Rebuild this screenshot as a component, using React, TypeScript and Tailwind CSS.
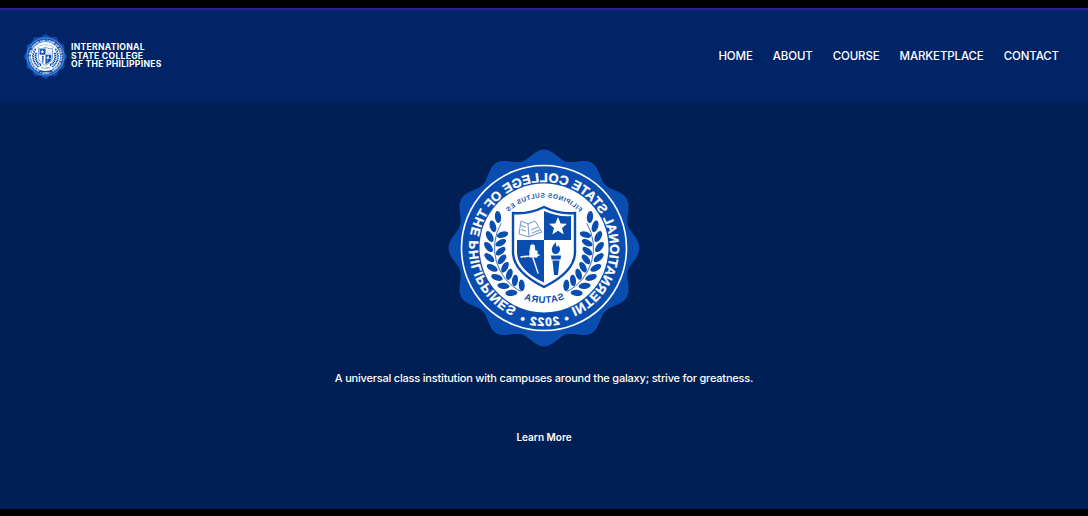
const INK = "#0a4db0";

// wavy badge outline, 12 lobes
function badgePath() {
  const pts: string[] = [];
  for (let i = 0; i < 360; i += 3) {
    const a = (i * Math.PI) / 180;
    const r = 92.5 + 4.5 * Math.cos(12 * a);
    pts.push(`${(0.985 * r * Math.sin(a)).toFixed(2)} ${(-1.015 * r * Math.cos(a)).toFixed(2)}`);
  }
  return `M${pts.join("L")}Z`;
}

function arc(r: number, from: number, to: number, sweep: 0 | 1) {
  const p = (d: number) => {
    const a = (d * Math.PI) / 180;
    return `${(r * Math.sin(a)).toFixed(2)} ${(-r * Math.cos(a)).toFixed(2)}`;
  };
  const large = Math.abs(to - from) > 180 ? 1 : 0;
  return `M${p(from)}A${r} ${r} 0 ${large} ${sweep} ${p(to)}`;
}

function Laurel() {
  const angles = [56, 67, 78, 89, 100, 111, 122, 133, 144];
  return (
    <g fill={INK}>
      {[1, -1].map((side) => (
        <g key={side} transform={`scale(${side} 1)`}>
          <path d={arc(49.5, 60, 152, 1)} fill="none" stroke={INK} strokeWidth="0.8" />
          {angles.map((d) => {
            const a = (d * Math.PI) / 180;
            const ox = 55.5 * Math.sin(a);
            const oy = -55.5 * Math.cos(a);
            const ix = 43.5 * Math.sin(a + 0.09);
            const iy = -43.5 * Math.cos(a + 0.09);
            return (
              <g key={d}>
                <ellipse cx={ox} cy={oy} rx="3.1" ry="6" transform={`rotate(${d - 50} ${ox} ${oy})`} />
                {d > 60 && (
                  <ellipse cx={ix} cy={iy} rx="3" ry="5.8" transform={`rotate(${d + 40} ${ix} ${iy})`} />
                )}
              </g>
            );
          })}
        </g>
      ))}
    </g>
  );
}

function Shield({ id }: { id: string }) {
  const outer = "M0 -41C10 -36 21 -34 31 -35L31 4C31 20 16 31 0 39C-16 31 -31 20 -31 4L-31 -35C-21 -34 -10 -36 0 -41Z";
  const inner = "M0 -37C9 -33 19 -31 27 -32L27 4C27 18 14 28 0 34.5C-14 28 -27 18 -27 4L-27 -32C-19 -31 -9 -33 0 -37Z";
  return (
    <g>
      <path d={outer} fill="#fff" stroke={INK} strokeWidth="2.4" />
      <clipPath id={id}>
        <path d={inner} />
      </clipPath>
      <g clipPath={`url(#${id})`}>
        <rect x="-31" y="-41" width="31" height="33" fill={INK} />
        <rect x="0" y="-8" width="31" height="47" fill={INK} />
      </g>
      {/* star */}
      <path
        d="M-14 -31L-11.4 -24.6L-5 -24.3L-10 -20.1L-8.3 -13.5L-14 -17.2L-19.7 -13.5L-18 -20.1L-23 -24.3L-16.6 -24.6Z"
        fill="#fff"
      />
      {/* book */}
      <g fill="#fff" stroke="#5d8ad4" strokeWidth="0.9" strokeLinejoin="round">
        <path d="M2 -16L9 -27L16 -24L23 -27L25 -14L15 -11L8 -14Z" />
        <path d="M16 -24L15 -11M4 -18L12 -15M6 -21L13 -18M18 -21L23 -22.5M18 -17L23 -18.5" fill="none" />
      </g>
      {/* hand with quill */}
      <g fill="none" stroke="#fff" strokeLinecap="round" strokeLinejoin="round">
        <path d="M5 7L23 9" strokeWidth="1.6" strokeDasharray="4 1.5" />
        <path d="M7 3H14V9H7Z" fill="#fff" strokeWidth="1.2" />
        <path d="M9 3L10 -3L13 -3L14 3" fill="#fff" strokeWidth="1" />
        <path d="M11 10L6 25" strokeWidth="1.4" />
      </g>
      {/* torch */}
      <g fill={INK}>
        <path d="M-12 -6C-9 -3 -7 0 -8 3C-8.5 5 -9.5 6 -11 6C-14 6 -16 4 -16 1C-16 -1 -14.5 -2 -14 -3C-13.5 -2 -13.5 -1 -13 -1C-12 -2 -12 -4 -12 -6Z" />
        <path d="M-17 7.5L-7 7.5L-7.5 11.5L-16.5 11.5Z" />
        <path d="M-15.5 12.5L-8.5 12.5L-10 27L-14 27Z" />
      </g>
    </g>
  );
}

function Seal({ size, mirror, id, className }: { size: number; mirror: boolean; id: string; className?: string }) {
  const ringFont = "font-['Liberation_Sans',sans-serif] font-bold";
  return (
    <svg viewBox="-100 -100 200 200" width={size} height={size} className={className}>
      <g transform={mirror ? "scale(-1 1)" : undefined}>
        <path d={badgePath()} fill={INK} />
        <circle r="82.5" fill="none" stroke="#fff" strokeWidth="1.6" />
        <circle r="64.5" fill="#fff" />
        <defs>
          <path id={`${id}-ring`} d={arc(66, -156, 156, 1)} />
          <path id={`${id}-year`} d={arc(78, 210, 150, 0)} />
          <path id={`${id}-top`} d={arc(50.5, -50, 50, 1)} />
          <path id={`${id}-bottom`} d={arc(55, 225, 135, 0)} />
        </defs>
        <text fill="#fff" stroke="#fff" strokeWidth="0.3" fontSize="13" className={ringFont}>
          <textPath href={`#${id}-ring`} textLength="358" lengthAdjust="spacing">
            INTERNATIONAL STATE COLLEGE OF THE PHILIPPINES
          </textPath>
        </text>
        <text fill="#fff" stroke="#fff" strokeWidth="0.3" fontSize="12" textAnchor="middle" className={ringFont}>
          <textPath href={`#${id}-year`} startOffset="50%" letterSpacing="1.3">
            •  2022  •
          </textPath>
        </text>
        <text fill={INK} fontSize="6.5" textAnchor="middle" className={ringFont}>
          <textPath href={`#${id}-top`} startOffset="50%" letterSpacing="0.5">
            FILIPINOS SULTUS ES
          </textPath>
        </text>
        <text fill={INK} fontSize="9.5" textAnchor="middle" className={ringFont}>
          <textPath href={`#${id}-bottom`} startOffset="50%" letterSpacing="0.6">
            SATURA
          </textPath>
        </text>
        <Laurel />
        <Shield id={`${id}-clip`} />
      </g>
    </svg>
  );
}

const NAV = ["HOME", "ABOUT", "COURSE", "MARKETPLACE", "CONTACT"];

export default function App() {
  return (
    <div className="flex h-[516px] flex-col overflow-hidden bg-black font-['Inter',sans-serif] text-white">
      <div className="mt-2 h-[2px] shrink-0 bg-[#2c1f9c]" />
      <header className="flex h-[92px] shrink-0 items-center justify-between bg-[#002466] pr-[29px] pl-[23px]">
        <div className="flex items-center gap-[3px]">
          <Seal size={45} mirror={false} id="logo" />
          <div className="text-[8.6px] leading-[8.6px] font-bold tracking-[0.27px]">
            <div>INTERNATIONAL</div>
            <div>STATE COLLEGE</div>
            <div>OF THE PHILIPPINES</div>
          </div>
        </div>
        <nav className="flex items-center gap-5 pt-px text-[11.5px] font-medium tracking-[-0.12px]">
          {NAV.map((item) => (
            <a key={item}>{item}</a>
          ))}
        </nav>
      </header>
      <main className="flex h-[407px] shrink-0 flex-col items-center bg-[#002055] pt-[46px]">
        <Seal size={200} mirror id="seal" />
        <p className="mt-[23px] text-[11px] leading-[14px] font-medium tracking-[-0.2px]">
          A universal class institution with campuses around the galaxy; strive for greatness.
        </p>
        <button className="mt-[37px] h-[31px] w-[105px] border border-[#001e50] text-[10px] font-semibold">
          Learn More
        </button>
      </main>
    </div>
  );
}
